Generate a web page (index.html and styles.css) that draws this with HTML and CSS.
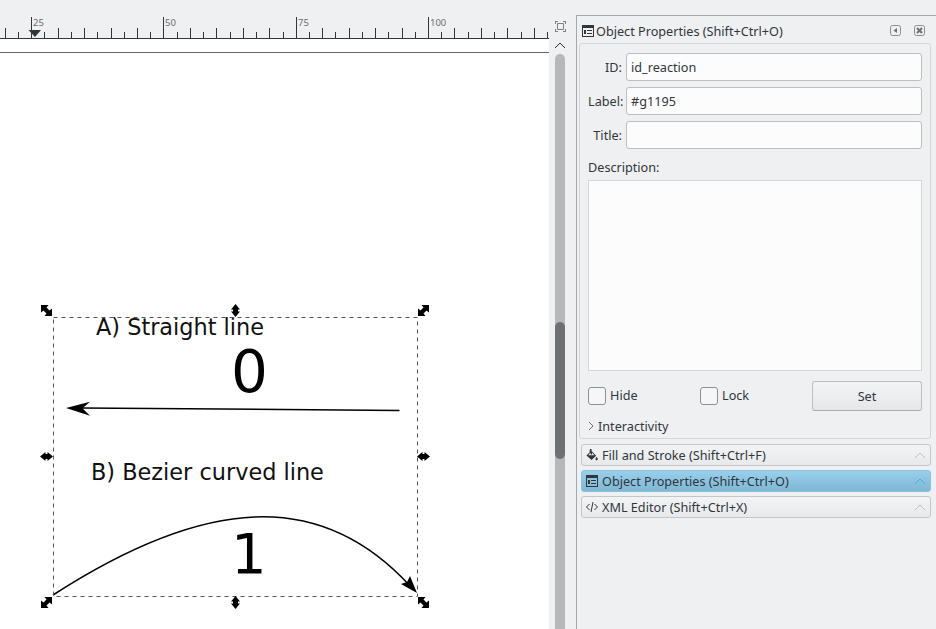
FILE: index.html
```html
<!DOCTYPE html>
<html>
	<head>
		<title>Object Properties</title>
		<link rel="stylesheet" href="styles.css">
	</head>
	<body>
		<div class="workspace">
			<svg class="ruler" viewBox="0 0 549 39">
				<path class="ticks" d="M31.5 17V38M163.5 17V38M296.5 17V38M428.5 17V38
					M5.5 28V38M58.5 28V38M84.5 28V38M111.5 28V38M137.5 28V38M190.5 28V38M216.5 28V38M243.5 28V38M269.5 28V38M322.5 28V38M349.5 28V38M375.5 28V38M402.5 28V38M454.5 28V38M481.5 28V38M507.5 28V38M534.5 28V38
					M18.5 32V38M44.5 32V38M71.5 32V38M97.5 32V38M124.5 32V38M150.5 32V38M177.5 32V38M203.5 32V38M230.5 32V38M256.5 32V38M283.5 32V38M309.5 32V38M335.5 32V38M362.5 32V38M388.5 32V38M415.5 32V38M441.5 32V38M468.5 32V38M494.5 32V38M521.5 32V38M547.5 32V38
					M0 38.5H549"/>
				<path class="marker" d="M28.5 30H41L35 37Z"/>
				<text class="ruler-num" x="33" y="26">25</text>
				<text class="ruler-num" x="165" y="26">50</text>
				<text class="ruler-num" x="298" y="26">75</text>
				<text class="ruler-num" x="430" y="26">100</text>
			</svg>
			<svg class="canvas" viewBox="0 39 549 590">
				<defs>
					<path id="h-straight" d="M0-6.500 4.500-1H2.500V1H4.500L0 6.500-4.500 1H-2.500V-1H-4.500Z"/>
					<path id="h-diag" d="M-5.500-5.500H2L0-3 3 0 5.500-2V5.500H-2L0 3-3 0-5.500 2Z"/>
				</defs>
				<path class="page-edge" d="M0 52.5H549"/>
				<text class="label" x="96" y="335">A) Straight line</text>
				<text class="digit" x="231" y="392">0</text>
				<path class="stroke" d="M399.500 410.500 82 408"/>
				<path d="M66 408 90 401.700 82.500 408.200 90 415.700Z"/>
				<text class="label" x="91" y="480">B) Bezier curved line</text>
				<text class="digit digit-one" x="231" y="573">1</text>
				<path class="stroke" d="M53 595C205 497 320 488 410 586"/>
				<path d="M417 593 401 584 407 582 410 576Z"/>
				<rect class="select" x="53.5" y="317.5" width="364" height="279"/>
				<use href="#h-diag" x="46.5" y="310.5"/>
				<use href="#h-diag" transform="translate(423.5 310.5) scale(-1 1)"/>
				<use href="#h-diag" transform="translate(46.5 602.5) scale(-1 1)"/>
				<use href="#h-diag" x="423.5" y="602.5"/>
				<use href="#h-straight" x="235.5" y="310.5"/>
				<use href="#h-straight" x="235.5" y="602.5"/>
				<use href="#h-straight" transform="translate(46.5 456.5) rotate(90)"/>
				<use href="#h-straight" transform="translate(423.5 456.5) rotate(90)"/>
			</svg>
		</div>

		<div class="vscroll">
			<svg class="zoom-fit" viewBox="0 0 11 11"><path d="M2.500 2.500H8.500V8.500H2.500ZM0 .5H3M.5 0V3M8 .5H11M10.500 0V3M0 10.500H3M.5 8V11M8 10.500H11M10.500 8V11"/></svg>
			<svg class="scroll-up" viewBox="0 0 12 7"><path d="M1 6 6 1 11 6"/></svg>
			<div class="track"><div class="thumb"></div></div>
		</div>

		<div class="dock">
			<div class="dock-head">
				<svg class="icon" viewBox="0 0 12 12"><path class="props-icon" d="M0 0H12V12H0ZM1 3V11H11V3ZM2 5H4V9H2ZM5 5H10V6H5ZM5 8H10V9H5Z"/></svg>
				<span class="dock-title">Object Properties (Shift+Ctrl+O)</span>
				<svg class="head-btn" viewBox="0 0 11 11"><rect x=".5" y=".5" width="10" height="10" rx="2"/><path class="solid" d="M7 3V8L3.500 5.500Z"/></svg>
				<svg class="head-btn" viewBox="0 0 11 11"><rect x=".5" y=".5" width="10" height="10" rx="2"/><path class="cross" d="M3 3 8 8M8 3 3 8"/></svg>
			</div>

			<div class="frame">
				<div class="fields">
					<span class="field-label">ID:</span><div class="field">id_reaction</div>
					<span class="field-label">Label:</span><div class="field">#g1195</div>
					<span class="field-label">Title:</span><div class="field"></div>
				</div>
				<div class="desc-label">Description:</div>
				<div class="desc"></div>
				<div class="actions">
					<span class="check"><i class="box"></i><span class="check-text">Hide</span></span>
					<span class="check"><i class="box"></i><span class="check-text">Lock</span></span>
					<div class="set-btn">Set</div>
				</div>
				<div class="expander">
					<svg class="arrow" viewBox="0 0 6 10"><path d="M1 1 5 5 1 9"/></svg>
					Interactivity
				</div>
			</div>

			<div class="bars">
				<div class="bar">
					<svg class="icon bar-icon" viewBox="0 0 13 13"><path class="props-icon" d="M4.500 0H6V2.200L11 7.200 6 12 .5 7 4 3.500V1ZM4 5 2.500 6.800H9.200L6.500 4V6H5V4Z"/><path class="props-icon" d="M11.500 8.500 13 11 11.500 12.500 10 11Z"/></svg>
					Fill and Stroke (Shift+Ctrl+F)
					<svg class="bar-chev" viewBox="0 0 12 7"><path d="M1 6 6 1 11 6"/></svg>
				</div>
				<div class="bar bar-on">
					<svg class="icon bar-icon" viewBox="0 0 12 12"><path class="props-icon" d="M0 0H12V12H0ZM1 3V11H11V3ZM2 5H4V9H2ZM5 5H10V6H5ZM5 8H10V9H5Z"/></svg>
					Object Properties (Shift+Ctrl+O)
					<svg class="bar-chev" viewBox="0 0 12 7"><path d="M1 6 6 1 11 6"/></svg>
				</div>
				<div class="bar">
					<svg class="icon bar-icon code-icon" viewBox="0 0 12 12"><path d="M3.500 3 .5 6 3.500 9M8.500 3 11.500 6 8.500 9M7 1 5 11"/></svg>
					XML Editor (Shift+Ctrl+X)
					<svg class="bar-chev" viewBox="0 0 12 7"><path d="M1 6 6 1 11 6"/></svg>
				</div>
			</div>
		</div>
	</body>
</html>
```

FILE: styles.css
```css
* {
	margin: 0; padding: 0;
	box-sizing: border-box;
}

body {
	display: flex;
	width: 936px; height: 629px;
	overflow: hidden;
	font-family: "Noto Sans", sans-serif;
	font-size: 12.67px;
	color: #31363b;
	background: #eff0f1;
}

svg {
	display: block;
}

/* canvas side */

.workspace {
	width: 549px;
	display: flex;
	flex-direction: column;
}

.ruler {
	width: 549px; height: 39px;
}

.ticks {
	fill: none;
	stroke: #31363b;
	stroke-width: 1;
}

.marker {
	fill: #31363b;
}

.ruler-num {
	font-size: 9.5px;
	fill: #6a6d70;
}

.canvas {
	width: 549px; height: 590px;
	background: #fff;
}

.page-edge {
	stroke: #666;
	stroke-width: 1;
}

.label {
	font-family: "DejaVu Sans", sans-serif;
	font-size: 22.4px;
	fill: #111;
}

.digit {
	font-family: "DejaVu Sans", sans-serif;
	font-size: 58px;
}

.digit-one {
	font-size: 56px;
}

.stroke {
	fill: none;
	stroke: #000;
	stroke-width: 1.5;
}

.select {
	fill: none;
	stroke: #555;
	stroke-width: 1;
	stroke-dasharray: 4 4;
}

/* scrollbar column */

.vscroll {
	width: 27px;
	display: flex;
	flex-direction: column;
	align-items: center;
	padding-right: 5px;
}

.zoom-fit {
	width: 11px; height: 11px;
	margin-top: 21px;
	fill: none;
	stroke: #7d8083;
	stroke-width: 1;
}

.scroll-up {
	width: 12px; height: 7px;
	margin-top: 10px;
	fill: none;
	stroke: #31363b;
	stroke-width: 1;
}

.track {
	width: 10px;
	flex: 1;
	margin-top: 5px;
	padding-top: 268px;
	border-radius: 5px 5px 0 0;
	background: #b6b8ba;
}

.thumb {
	height: 137px;
	border-radius: 5px;
	background: #6d7173;
}

/* dock */

.dock {
	width: 360px;
	margin-top: 15px;
	border-top: 1px solid #a5a7a9;
	border-left: 1px solid #a5a7a9;
}

.dock-head {
	display: flex;
	align-items: center;
	gap: 13px;
	height: 27px;
	padding: 2px 0 0 5px;
}

.icon {
	width: 12px; height: 12px;
	flex-shrink: 0;
}

.props-icon {
	fill: #31363b;
	fill-rule: evenodd;
}

.dock-title {
	margin-left: -11px;
	width: 281px;
	white-space: nowrap;
}

.head-btn {
	width: 11px; height: 11px;
	fill: none;
	stroke: #8b8e91;
}

.solid {
	fill: #6d7173;
	stroke: none;
}

.cross {
	stroke: #6d7173;
	stroke-width: 2;
}

.frame {
	width: 352px; height: 396px;
	margin-left: 2px;
	padding: 9px 8px 0;
	border: 1px solid #d3d5d7;
	border-radius: 3px;
}

.fields {
	display: grid;
	grid-template-columns: 34px 296px;
	grid-auto-rows: 28px;
	gap: 6px 4px;
	align-items: center;
}

.field-label {
	text-align: right;
	white-space: nowrap;
}

.field {
	height: 28px;
	line-height: 26px;
	padding-left: 4px;
	background: #fcfcfc;
	border: 1px solid #bcbec0;
	border-radius: 3px;
}

.desc-label {
	height: 18px;
	line-height: 18px;
	margin-top: 9px;
}

.desc {
	height: 191px;
	margin-top: 4px;
	background: #fcfcfc;
	border: 1px solid #d3d5d7;
}

.actions {
	display: flex;
	align-items: center;
	height: 30px;
	margin-top: 10px;
}

.check {
	display: flex;
	align-items: center;
	gap: 4px;
	width: 112px;
	white-space: nowrap;
}

.check-text {
	margin-bottom: 2px;
}

.box {
	width: 18px; height: 18px;
	background: #f6f6f7;
	border: 1px solid #8f9294;
	border-radius: 3px;
}

.set-btn {
	width: 110px; height: 30px;
	line-height: 28px;
	text-align: center;
	background: linear-gradient(#f3f4f5, #e6e7e8);
	border: 1px solid #bcbec0;
	border-bottom-color: #a9abad;
	border-radius: 3px;
}

.expander {
	display: flex;
	align-items: center;
	gap: 4px;
	height: 18px;
	margin-top: 6px;
	white-space: nowrap;
}

.arrow {
	width: 6px; height: 10px;
	fill: none;
	stroke: #6d7173;
	stroke-width: 1;
}

.bars {
	display: flex;
	flex-direction: column;
	gap: 4px;
	width: 350px;
	margin: 5px 0 0 4px;
}

.bar {
	display: flex;
	align-items: center;
	height: 22px;
	padding-left: 4px;
	white-space: nowrap;
	background: linear-gradient(#f2f3f4, #e8e9ea);
	border: 1px solid #c4c6c8;
	border-radius: 3px;
}

.bar-on {
	background: linear-gradient(#98d0ec, #7fb7d4);
	border-color: #8ac2de;
}

.bar-icon {
	margin-right: 4px;
}

.code-icon {
	fill: none;
	stroke: #31363b;
	stroke-width: 1;
}

.bar-chev {
	width: 12px; height: 7px;
	margin-left: auto;
	margin-right: 4px;
	fill: none;
	stroke: #c0c2c4;
	stroke-width: 1;
}

.bar-on .bar-chev {
	stroke: #3daee9;
}
```
